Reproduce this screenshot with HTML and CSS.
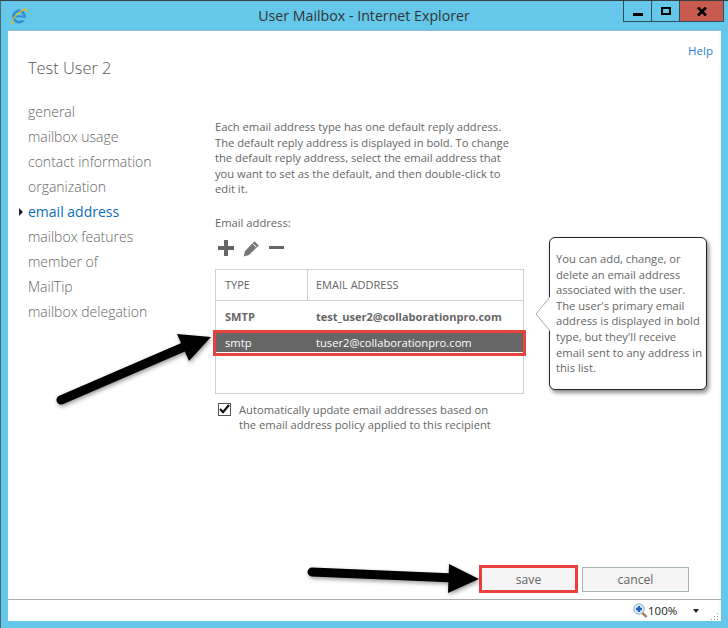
FILE: index.html
```html
<!DOCTYPE html>
<html lang="en">
<head>
    <meta charset="UTF-8">
    <title>User Mailbox - Internet Explorer</title>
    <link rel="stylesheet" href="styles.css">
</head>
<body>
    <!-- Title bar -->
    <div class="titlebar">
        <svg class="ie-logo" width="18" height="18" viewBox="0 0 18 18">
            <circle cx="9" cy="9.5" r="5.6" fill="none" stroke="#2f8fd6" stroke-width="2.6"/>
            <rect x="5" y="8.4" width="8.6" height="2" fill="#2f8fd6"/>
            <rect x="10" y="11" width="6" height="2.2" fill="#65c8ea"/>
            <path d="M1.5 16.5C-0.5 13 9 3 15 1.5C17.5 1 17 4 15.5 6.5C16 3.5 15.5 2.5 13.5 3.5C8.5 6 2 12.5 2.5 15.5C3 16.5 4 16.5 5.5 15.8C4 17 2.5 17.3 1.5 16.5Z" fill="#f2b90f"/>
        </svg>
        <div class="title">User Mailbox - Internet Explorer</div>
        <div class="win-controls">
            <div class="win-btn"><span class="icon-min"></span></div>
            <div class="win-btn"><span class="icon-max"></span></div>
            <div class="win-btn close">
                <svg width="10" height="9" viewBox="0 0 10 9"><path d="M1 0.5L9 8.5M9 0.5L1 8.5" stroke="#000" stroke-width="2.6"/></svg>
            </div>
        </div>
    </div>

    <div class="content">
        <a class="help">Help</a>
        <h1 class="user-name">Test User 2</h1>

        <div class="columns">
            <!-- Left menu -->
            <ul class="nav">
                <li>general</li>
                <li>mailbox usage</li>
                <li>contact information</li>
                <li>organization</li>
                <li class="active">email address</li>
                <li>mailbox features</li>
                <li>member of</li>
                <li>MailTip</li>
                <li>mailbox delegation</li>
            </ul>

            <div class="main">
                <p class="intro">Each email address type has one default reply address.<br>The default reply address is displayed in bold. To change<br>the default reply address, select the email address that<br>you want to set as the default, and then double-click to<br>edit it.</p>

                <div class="field-label">Email address:</div>

                <div class="toolbar">
                    <svg width="16" height="16" viewBox="0 0 16 16"><path d="M6 0h4v6h6v4h-6v6H6v-6H0V6h6z" fill="#666"/></svg>
                    <svg width="17" height="17" viewBox="0 0 17 17"><path d="M11.5 1.2L15.8 5.4L6 15L0.6 16.4L2 11z" fill="#777"/><path d="M10 3.8L13.2 7" stroke="#fff" stroke-width="1"/></svg>
                    <svg width="15" height="4" viewBox="0 0 15 4"><rect width="15" height="3" fill="#666"/></svg>
                </div>

                <div class="email-table">
                    <div class="table-head">
                        <div class="col-type">TYPE</div>
                        <div class="col-addr">EMAIL ADDRESS</div>
                    </div>
                    <div class="table-row bold">
                        <div class="col-type">SMTP</div>
                        <div class="col-addr">test_user2@collaborationpro.com</div>
                    </div>
                    <div class="table-row selected">
                        <div class="col-type">smtp</div>
                        <div class="col-addr">tuser2@collaborationpro.com</div>
                    </div>
                </div>

                <label class="check-row">
                    <span class="checkbox">
                        <svg width="11" height="10" viewBox="0 0 11 10"><path d="M1 5L4 8.2L10 1" fill="none" stroke="#111" stroke-width="2.2"/></svg>
                    </span>
                    <span>Automatically update email addresses based on<br>the email address policy applied to this recipient</span>
                </label>

                <!-- Tooltip -->
                <div class="callout">
                    You can add, change, or<br>delete an email address<br>associated with the user.<br>The user's primary email<br>address is displayed in bold<br>type, but they'll receive<br>email sent to any address in<br>this list.
                    <svg class="callout-tip" width="16" height="34" viewBox="0 0 16 34"><path d="M15 0L1 17L15 34" fill="#fff" stroke="#aaa"/></svg>
                </div>
            </div>
        </div>

        <div class="actions">
            <div class="button save">save</div>
            <div class="button">cancel</div>
        </div>
    </div>

    <!-- Status bar -->
    <div class="statusbar">
        <svg width="15" height="15" viewBox="0 0 15 15">
            <path d="M9 9.5L13.5 14" stroke="#a5764a" stroke-width="2.4"/>
            <circle cx="6" cy="6" r="5.2" fill="#dcebf7" stroke="#8fa9c0"/>
            <path d="M3 6h6M6 3v6" stroke="#1f62c0" stroke-width="2.4"/>
        </svg>
        <span class="zoom-level">100%</span>
        <span class="zoom-arrow"></span>
        <svg class="grip" width="8" height="8" viewBox="0 0 8 8">
            <path d="M6 0h1v1H6zM3 3h1v1H3zM6 3h1v1H6zM0 6h1v1H0zM3 6h1v1H3zM6 6h1v1H6z" fill="#999"/>
        </svg>
    </div>

    <!-- Arrows drawn over the screenshot -->
    <svg class="arrows" width="728" height="628" viewBox="0 0 728 628">
        <g class="arrow-shapes">
            <path d="M61 400L186 346" stroke="#000" stroke-width="9" stroke-linecap="round"/>
            <path d="M177 334L211 337L189 361z" fill="#000"/>
            <path d="M312 572L455 578" stroke="#000" stroke-width="9" stroke-linecap="round"/>
            <path d="M449 564L479 579L448 593z" fill="#000"/>
        </g>
    </svg>
</body>
</html>
```

FILE: styles.css
```css
* {
    box-sizing: border-box;
}

body {
    margin: 0;
    width: 728px;
    height: 628px;
    background-color: #65c8ea;
    border-top: 1px solid #3a3f44;
    border-left: 1px solid #4a6a78;
    font-family: "Open Sans", Arial, sans-serif;
    color: #666;
    display: flex;
    flex-direction: column;
    overflow: hidden;
    position: relative;
}

.titlebar {
    height: 29px;
    flex-shrink: 0;
    position: relative;
    display: flex;
    justify-content: center;
    align-items: center;
}

.ie-logo {
    position: absolute;
    left: 9px;
    top: 6px;
}

.title {
    font-size: 14.2px;
    color: #333;
    margin-right: 1px;
}

.win-controls {
    position: absolute;
    top: 0;
    left: 622px;
    width: 101px;
    height: 21px;
    display: flex;
    border: 1px solid #2f4f5c;
    border-top: 0;
}

.win-btn {
    width: 28px;
    display: flex;
    align-items: center;
    justify-content: center;
    border-right: 1px solid #2f4f5c;
}

.win-btn.close {
    flex: 1;
    border-right: 0;
    background: #c75b50;
}

.icon-min {
    width: 10px;
    height: 3px;
    background: #000;
    margin-top: 6px;
}

.icon-max {
    width: 10px;
    height: 8px;
    border: 2px solid #000;
}

.content {
    flex: 1;
    margin: 0 7px 0 7px;
    background: #fff;
    display: flex;
    flex-direction: column;
    border-top: 1px solid #8fb8ca;
}

.help {
    align-self: flex-end;
    margin: 12px 8px 0 0;
    font-size: 11.5px;
    line-height: 15px;
    color: #2a7fd0;
}

.user-name {
    margin: 0 0 0 20px;
    font-size: 16.4px;
    font-weight: 300;
    line-height: 20px;
    color: #555;
}

.columns {
    display: flex;
    margin-top: 21px;
    position: relative;
}

.nav {
    list-style: none;
    margin: 0;
    padding: 0 0 0 20px;
    width: 207px;
    flex-shrink: 0;
}

.nav li {
    font-size: 14px;
    font-weight: 300;
    line-height: 25px;
    position: relative;
    white-space: nowrap;
}

.nav li.active {
    color: #0b6cb8;
    font-weight: 400;
}

.nav li.active::before {
    content: "";
    position: absolute;
    left: -9px;
    top: 9px;
    border-left: 4px solid #222;
    border-top: 4px solid transparent;
    border-bottom: 4px solid transparent;
}

.main {
    width: 309px;
    padding-top: 20px;
    font-size: 11.2px;
    position: relative;
}

.intro {
    margin: 0;
    line-height: 15.6px;
    white-space: nowrap;
}

.field-label {
    margin-top: 18px;
    line-height: 15px;
}

.toolbar {
    display: flex;
    align-items: center;
    gap: 9px;
    margin: 10px 0 0 3px;
    height: 17px;
}

.email-table {
    margin-top: 12px;
    height: 125px;
    border: 1px solid #c9d2d6;
}

.table-head {
    display: flex;
    height: 31px;
    font-size: 11px;
    align-items: center;
    border-bottom: 1px solid #c9d2d6;
}

.col-type {
    width: 92px;
    padding-left: 9px;
    flex-shrink: 0;
}

.col-addr {
    padding-left: 8px;
    white-space: nowrap;
}

.table-head .col-type {
    height: 100%;
    display: flex;
    align-items: center;
    border-right: 1px solid #c9d2d6;
}

.table-row {
    display: flex;
    align-items: center;
    height: 19px;
}

.table-row.bold {
    font-size: 11.05px;
    font-weight: 700;
    margin-top: 6px;
    margin-bottom: 7px;
}

.table-row.selected {
    height: 20px;
    background: #666;
    color: #fff;
    outline: 3px solid #e8423f;
    position: relative;
    border-bottom: 1px solid #fff;
}

.check-row {
    display: flex;
    gap: 8px;
    margin: 8px 0 0 3px;
    line-height: 15px;
    white-space: nowrap;
}

.checkbox {
    width: 13px;
    height: 13px;
    margin-top: 1px;
    border: 1px solid #555;
    display: flex;
    align-items: center;
    justify-content: center;
    flex-shrink: 0;
}

.callout {
    position: absolute;
    left: 334px;
    top: 138px;
    width: 158px;
    height: 153px;
    padding: 13px 0 0 6px;
    background: #fff;
    border: 1px solid #222;
    border-radius: 6px;
    box-shadow: 2px 3px 4px rgba(0, 0, 0, 0.45);
    line-height: 15.6px;
    white-space: nowrap;
}

.callout-tip {
    position: absolute;
    left: -15px;
    top: 59px;
}

.actions {
    margin-top: auto;
    padding: 0 32px 6px 0;
    display: flex;
    justify-content: flex-end;
    align-items: center;
    gap: 4px;
}

.button {
    width: 107px;
    height: 25px;
    border: 1px solid #a9b4b6;
    background: #f5f5f5;
    display: flex;
    align-items: center;
    justify-content: center;
    font-size: 12.2px;
}

.button.save {
    width: 99px;
    height: 28px;
    border: 3px solid #e8423f;
}

.statusbar {
    height: 22px;
    margin: 0 7px 7px 7px;
    flex-shrink: 0;
    background: #fff;
    border-top: 1px solid #aaa;
    display: flex;
    align-items: center;
    padding-left: 625px;
    font-size: 11.5px;
    color: #222;
    position: relative;
}

.zoom-level {
    margin-left: 0;
}

.zoom-arrow {
    margin-left: 16px;
    border-top: 4px solid #222;
    border-left: 3px solid transparent;
    border-right: 3px solid transparent;
}

.grip {
    position: absolute;
    right: 2px;
    bottom: 0;
}

.arrows {
    position: absolute;
    top: -1px;
    left: -1px;
    pointer-events: none;
}

.arrow-shapes {
    filter: drop-shadow(1px 2px 2px rgba(0, 0, 0, 0.4));
}
```
